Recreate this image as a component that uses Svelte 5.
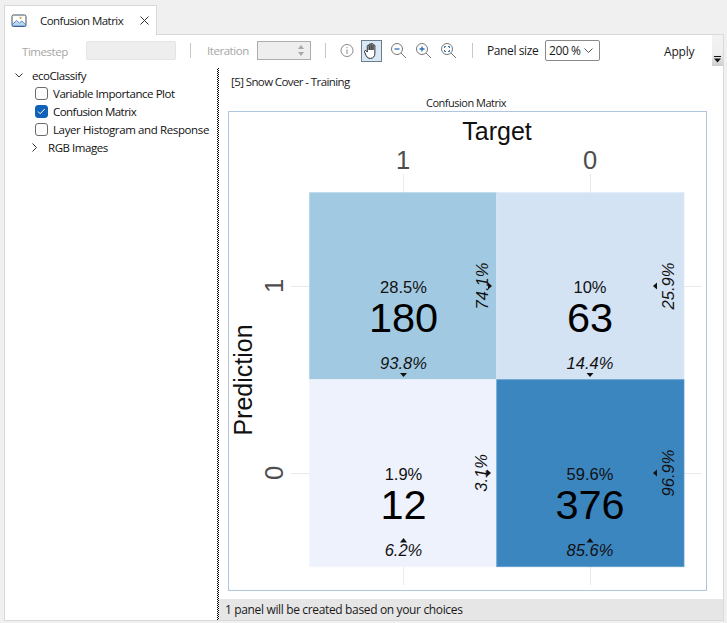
<script>
  const W = 187.25;
  const cells = [
    { x: 309.5, y: 192.7, fill: '#a1cae2', edge: '#b4d5e8', top: '28.5%', n: '180', bottom: '93.8%', side: '74.1%', cx: 403.5, cy: 286, sideX: 481, triDown: true, triRight: true },
    { x: 496.75, y: 192.7, fill: '#d3e3f4', edge: '#dfeaf7', top: '10%', n: '63', bottom: '14.4%', side: '25.9%', cx: 590, cy: 286, sideX: 667, triDown: true, triRight: false },
    { x: 309.5, y: 379.7, fill: '#eef2fd', edge: '#f2f4fb', top: '1.9%', n: '12', bottom: '6.2%', side: '3.1%', cx: 403.5, cy: 473, sideX: 480, triDown: false, triRight: true },
    { x: 496.75, y: 379.7, fill: '#3c86c0', edge: '#5b9acb', top: '59.6%', n: '376', bottom: '85.6%', side: '96.9%', cx: 590, cy: 473, sideX: 667, triDown: false, triRight: false }
  ];
</script>

<div class="window">
  <div class="tabstrip">
    <div class="tab">
      <svg class="tabicon" width="16" height="14" viewBox="0 0 16 14">
        <rect x="1" y="1" width="14" height="11.5" rx="1.5" fill="#fff" stroke="#3f4f63" />
        <path d="M1.5 10.5 L5.5 6.5 L8.5 9 L11 7 L14.5 10.5 V12 H1.5Z" fill="#bcd6ee" stroke="#3b7fc4" stroke-width="0.8" />
        <circle cx="9.5" cy="3.8" r="1.1" fill="#d9a441" />
      </svg>
      <span class="tabtitle">Confusion Matrix</span>
      <svg class="close" width="9" height="9" viewBox="0 0 9 9"><path d="M.5.5l8 8M8.5.5l-8 8" stroke="#333" fill="none" /></svg>
    </div>
  </div>

  <div class="panel">
    <div class="toolbar">
      <span class="lbl dim first">Timestep</span>
      <span class="ts"></span>
      <span class="sep s1"></span>
      <span class="lbl dim iter">Iteration</span>
      <span class="spin"><i class="up"></i><i class="down"></i></span>
      <span class="sep s2"></span>
      <svg class="info" width="15" height="15" viewBox="0 0 15 15">
        <circle cx="7" cy="7.5" r="6" fill="none" stroke="#8a8a8a" />
        <path d="M7 6.500v4.500M7 4v1.200" stroke="#8a8a8a" fill="none" />
      </svg>
      <span class="hand">
        <svg width="19" height="19" viewBox="0 0 18 18">
          <path d="M5 10.500V5a.9.9 0 0 1 1.800 0v3.500V3.600a.9.9 0 0 1 1.800 0v4.900V3.200a.9.9 0 0 1 1.800 0v5.300V4.600a.9.9 0 0 1 1.800 0v7.200c0 2.700-1.600 4.700-4.200 4.700-2 0-3-.8-4-2.500L2.500 10.500c-.7-1.100.7-2 1.500-1.200z" fill="#fff" stroke="#222" stroke-width="0.9" stroke-linejoin="round" />
        </svg>
      </span>
      <svg class="zoomi" width="17" height="17" viewBox="0 0 17 17">
        <circle cx="7" cy="7" r="5.500" fill="none" stroke="#777" /><path d="M11 11l5 5" stroke="#777" fill="none" />
        <path d="M4.500 7h5" stroke="#2a6fb5" stroke-width="1.300" fill="none" />
      </svg>
      <svg class="zoomi" width="17" height="17" viewBox="0 0 17 17">
        <circle cx="7" cy="7" r="5.500" fill="none" stroke="#777" /><path d="M11 11l5 5" stroke="#777" fill="none" />
        <path d="M4.500 7h5M7 4.500v5" stroke="#2a6fb5" stroke-width="1.300" fill="none" />
      </svg>
      <svg class="zoomi last" width="17" height="17" viewBox="0 0 17 17">
        <circle cx="7" cy="7" r="5.500" fill="none" stroke="#777" /><path d="M11 11l5 5" stroke="#777" fill="none" />
        <path d="M4.500 6V4.500H6M8 4.500h1.500V6M9.500 8v1.500H8M6 9.500H4.500V8" stroke="#2a6fb5" fill="none" />
      </svg>
      <span class="sep s3"></span>
      <span class="lbl psize">Panel size</span>
      <span class="combo">200 %
        <svg width="9" height="5" viewBox="0 0 9 5"><path d="M.5.500l4 4 4-4" fill="none" stroke="#555" /></svg>
      </span>
      <span class="apply">Apply</span>
      <span class="overflow"><svg width="7" height="7" viewBox="0 0 7 7"><path d="M0 0h7v1H0zM0 2.500h7L3.500 6.500z" fill="#111" /></svg></span>
    </div>

    <div class="main">
      <div class="tree">
        <div class="row root">
          <svg width="8" height="5" viewBox="0 0 8 5"><path d="M.5.500l3.500 3.500 3.500-3.500" fill="none" stroke="#333" /></svg>
          <span>ecoClassify</span>
        </div>
        <div class="row item"><span class="cb"></span><span>Variable Importance Plot</span></div>
        <div class="row item">
          <span class="cb on"><svg width="9" height="7" viewBox="0 0 9 7"><path d="M1 3.500l2.200 2.200 4.500-4.700" fill="none" stroke="#fff" /></svg></span>
          <span class="tight">Confusion Matrix</span>
        </div>
        <div class="row item"><span class="cb"></span><span class="loose">Layer Histogram and Response</span></div>
        <div class="row rgb">
          <svg width="5" height="9" viewBox="0 0 5 9"><path d="M.5.500l4 4-4 4" fill="none" stroke="#333" /></svg>
          <span>RGB Images</span>
        </div>
      </div>

      <div class="splitter"></div>

      <div class="content">
        <div class="scenario">[5] Snow Cover - Training</div>
        <div class="plot-title">Confusion Matrix</div>
        <div class="plot">
          <svg class="chart" width="727" height="623" viewBox="0 0 727 623">
            <g stroke="#ebebeb" stroke-width="1">
              <path d="M403.500 174V193M590.500 174V193M403.500 567V585M590.500 567V585" />
              <path d="M291 286.500H310M291 473.500H310M684 286.500H702M684 473.500H702" />
            </g>
            {#each cells as c}
              <rect x={c.x} y={c.y} width={W} height={W - 0.25} fill={c.fill} stroke={c.edge} stroke-width="0.8" />
            {/each}
            <text class="head" x="497" y="140" text-anchor="middle">Target</text>
            <text class="tick" x="403" y="169" text-anchor="middle">1</text>
            <text class="tick" x="590" y="169" text-anchor="middle">0</text>
            <text class="tick" transform="translate(283 286) rotate(-90)" text-anchor="middle">1</text>
            <text class="tick" transform="translate(283 473) rotate(-90)" text-anchor="middle">0</text>
            <text class="head" transform="translate(252 380) rotate(-90)" text-anchor="middle">Prediction</text>

            {#each cells as c}
              <text class="pct" x={c.cx} y={c.cy + 6.5} text-anchor="middle">{c.top}</text>
              <text class="num" x={c.cx} y={c.cy + 46} text-anchor="middle">{c.n}</text>
              <text class="pct it" x={c.cx} y={c.cy + 83} text-anchor="middle">{c.bottom}</text>
              <text class="pct it" transform="translate({c.sideX + 7} {c.cy}) rotate(-90)" text-anchor="middle">{c.side}</text>
              {#if c.triDown}
                <path d="M{c.cx - 3.5} {c.cy + 87}h7l-3.500 4z" fill="#111" />
              {:else}
                <path d="M{c.cx - 3.5} {c.cy + 69.5}h7l-3.500 -4.500z" fill="#111" />
              {/if}
              {#if c.triRight}
                <path d="M{c.sideX + 7} {c.cy - 3.5}v7l4 -3.500z" fill="#111" />
              {:else}
                <path d="M{c.sideX - 10} {c.cy - 3.5}v7l-4 -3.500z" fill="#111" />
              {/if}
            {/each}
          </svg>
        </div>
        <div class="status">1 panel will be created based on your choices</div>
      </div>
    </div>
  </div>
</div>

<style>
  :global(body) { margin: 0; background: #f0f0f0; }
  .window {
    width: 727px; height: 623px; box-sizing: border-box; overflow: hidden; padding-top: 5px;
    font-family: "Open Sans", "Noto Sans", sans-serif; font-size: 11.5px; color: #1a1a1a;
    letter-spacing: -0.45px;
  }
  .tabstrip { height: 30px; padding-left: 4px; position: relative; z-index: 1; }
  .tab {
    width: 153px; height: 30px; box-sizing: border-box; background: #fff;
    border: 1px solid #d9d9d9; border-bottom: 0;
    display: flex; align-items: center; padding-left: 6px;
  }
  .tabtitle { margin-left: 13px; width: 85px; flex: none; white-space: nowrap; letter-spacing: -0.55px; }
  .tabicon { flex: none; }
  .close { flex: none; margin-left: 15px; }
  .panel {
    margin-left: 4px; margin-right: 3px; margin-top: -1px; height: 587px; box-sizing: border-box;
    background: #fff; border: 1px solid #d9d9d9; display: flex; flex-direction: column;
  }
  .toolbar { height: 33px; flex: none; display: flex; align-items: center; position: relative; padding-bottom: 2px; box-sizing: border-box; white-space: nowrap; }
  .lbl.dim { color: #a6a6a6; }
  .first { margin-left: 17px; width: 48px; margin-top: 2px; }
  .ts { width: 90px; height: 19px; box-sizing: border-box; margin-left: 16px; background: #eeeeee; border: 1px solid #e4e4e4; border-radius: 2px; }
  .sep { width: 1px; height: 15px; background: #c8c8c8; }
  .s1 { margin: 0 16px 0 14px; }
  .iter { width: 43px; }
  .spin {
    width: 54px; height: 19px; box-sizing: border-box; margin-left: 7px; background: #eeeeee; border: 1px solid #adadad;
    position: relative; display: block;
  }
  .spin i { position: absolute; right: 6px; width: 0; height: 0; border-left: 3px solid transparent; border-right: 3px solid transparent; }
  .up { top: 3px; border-bottom: 4px solid #a8a8a8; }
  .down { bottom: 3px; border-top: 4px solid #a8a8a8; }
  .s2 { margin: 0 14px; }
  .info { margin-right: 6px; flex: none; }
  .hand {
    width: 21px; height: 22px; box-sizing: border-box; display: flex; align-items: center; justify-content: center;
    background: #d9e8f7; border: 1px solid #6f7c8a; margin-right: 8px;
  }
  .zoomi { margin-right: 8px; flex: none; }
  .zoomi.last { margin-right: 0; }
  .s3 { margin: 0 14px 0 15px; }
  .psize { width: 51px; font-size: 12px; letter-spacing: -0.4px; }
  .combo {
    width: 55px; height: 21px; box-sizing: border-box; margin-left: 7px; border: 1px solid #8a8a8a; border-radius: 2px;
    display: flex; align-items: center; justify-content: space-between; padding: 0 6px 0 3px; font-size: 12px; letter-spacing: -0.4px;
  }
  .apply { margin-left: 64px; font-size: 12px; margin-top: 2px; letter-spacing: -0.2px; }
  .overflow {
    position: absolute; right: 0; top: 0; width: 11px; height: 31px; box-sizing: border-box; padding-bottom: 3px;
    background: linear-gradient(to bottom, #f3f3f3 0, #efefef 60%, #cdcdcd 100%);
    display: flex; align-items: flex-end; justify-content: center;
  }
  .main { flex: 1; min-height: 0; display: flex; }
  .tree { width: 212px; flex: none; margin-top: -2px; }
  .row { height: 18px; display: flex; align-items: center; white-space: nowrap; color: #111; }
  .root { padding-left: 10px; gap: 9px; }
  .item { padding-left: 30px; gap: 5px; }
  .rgb { padding-left: 27px; gap: 11px; }
  .tight { letter-spacing: -0.55px; }
  .loose { letter-spacing: -0.38px; }
  .cb {
    width: 11px; height: 11px; box-sizing: content-box; border: 1px solid #6b6b6b; border-radius: 3px; flex: none; background: #fdfdfd;
    display: flex; align-items: center; justify-content: center;
  }
  .cb.on { background: #0f62b8; border-color: #0f62b8; }
  .splitter {
    width: 2px; flex: none;
    background: repeating-conic-gradient(#000 0 25%, #fff 0 50%) 0 0 / 2px 2px;
  }
  .content { flex: 1; min-width: 0; display: flex; flex-direction: column; }
  .scenario { height: 28px; padding: 0 0 0 12px; line-height: 28px; box-sizing: border-box; letter-spacing: -0.6px; }
  .plot-title { height: 14px; line-height: 14px; text-align: center; width: 494px; padding-left: 0; margin-bottom: 1px; font-size: 11px; letter-spacing: -0.5px; }
  .plot {
    margin-left: 9px; width: 479px; height: 480px; box-sizing: border-box; border: 1px solid #afc6de; background: #fff;
    position: relative; overflow: hidden; flex: none;
  }
  .chart { position: absolute; left: -229px; top: -112px; }
  .head { font: 25px "Liberation Sans", Arial, sans-serif; letter-spacing: 0; fill: #111; }
  .tick { font: 25.5px "Liberation Sans", Arial, sans-serif; letter-spacing: 0; fill: #4d4d4d; }
  .pct { font: 16.5px "Liberation Sans", Arial, sans-serif; letter-spacing: 0; fill: #111; }
  .it { font-style: italic; }
  .num { font: 41.5px "Liberation Sans", Arial, sans-serif; letter-spacing: 0; fill: #000; }
  .status { margin-top: 8px; height: 21px; line-height: 21px; background: #e6e6e6; padding-left: 6px; flex: none; font-size: 12px; letter-spacing: -0.35px; white-space: nowrap; }
</style>
